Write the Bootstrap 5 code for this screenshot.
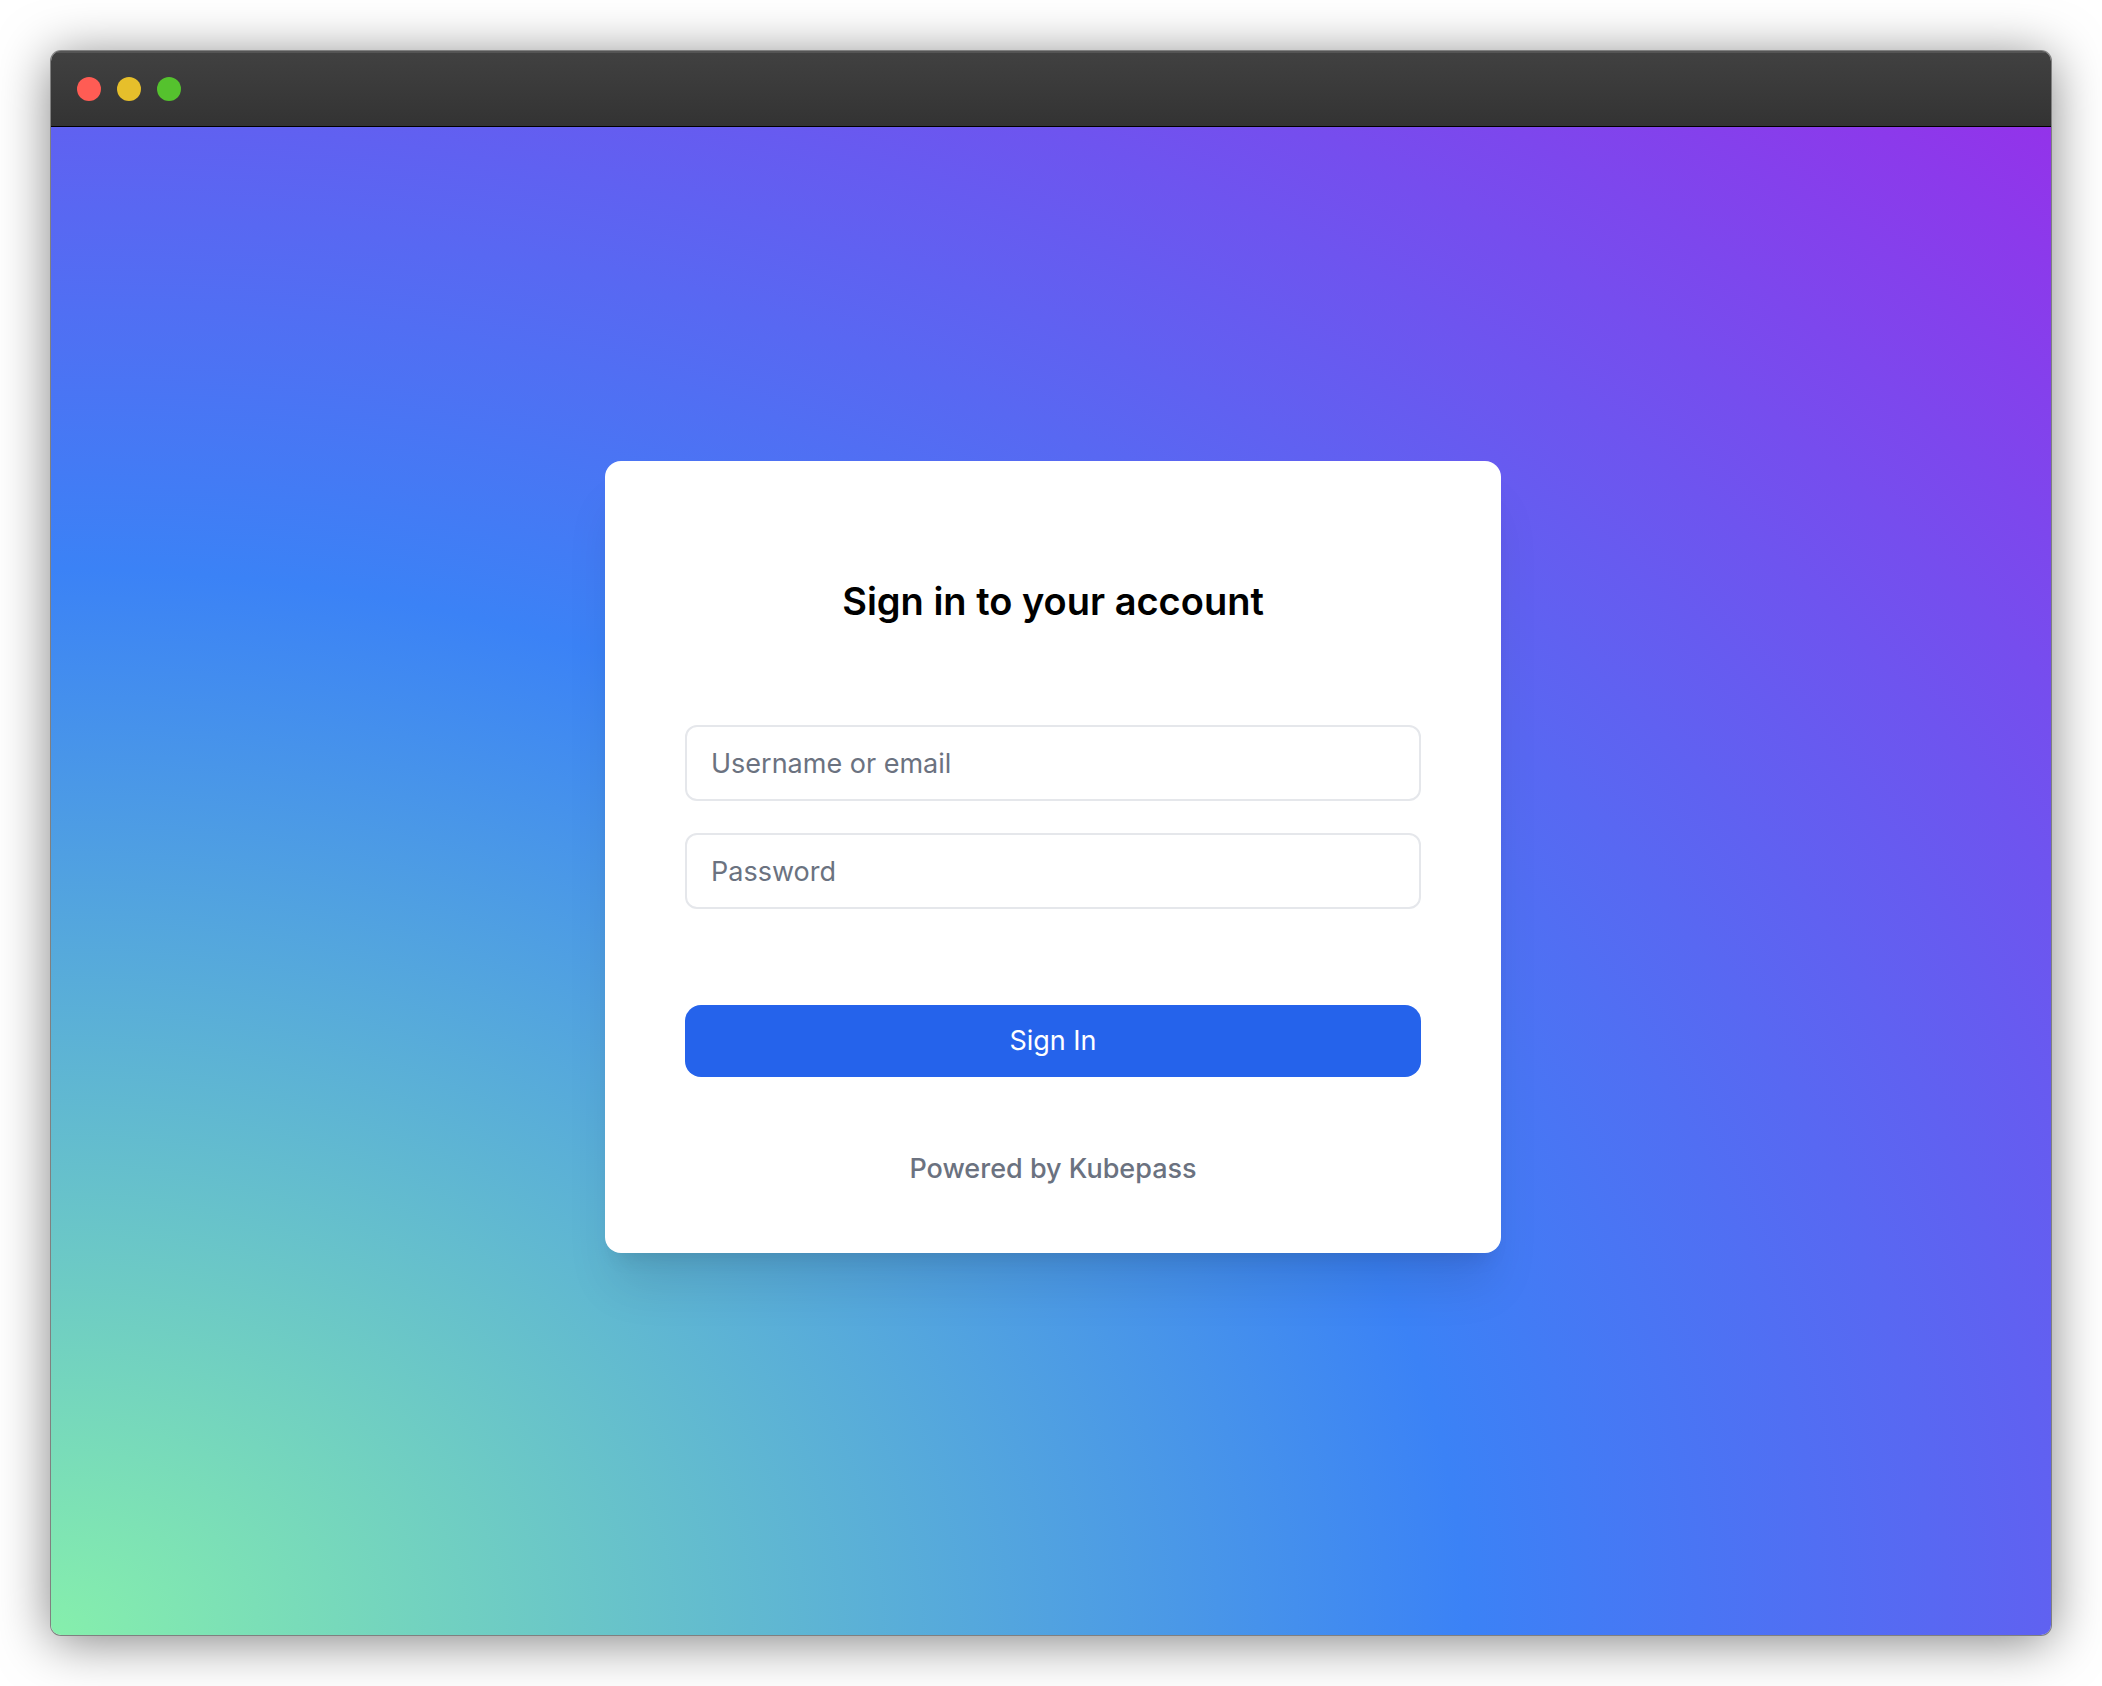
<!DOCTYPE html>
<html lang="en">
<head>
<meta charset="utf-8">
<meta name="viewport" content="width=device-width, initial-scale=1">
<title>Sign in to your account</title>
<link href="https://cdn.jsdelivr.net/npm/bootstrap@5.3.0/dist/css/bootstrap.min.css" rel="stylesheet">
<style>
  body { font-family: Inter, "Liberation Sans", sans-serif; padding: 51px; background: #fff; }
  .app-window {
    border-radius: 10px;
    box-shadow: 0 0 0 1px #808080, 0 6px 52px rgba(0, 0, 0, .5);
  }
  .title-bar {
    height: 76px;
    padding: 0 26px;
    gap: 16px;
    background: linear-gradient(#414141, #333);
    border-bottom: 1px solid #000;
    box-shadow: inset 0 2px 0 #555;
  }
  .light { width: 24px; height: 24px; border-radius: 50%; }
  .light-close { background: #ff5c54; }
  .light-min { background: #e6bf2b; }
  .light-max { background: #55c22e; }
  .backdrop {
    padding: 48px 0 96px 4px;
    background: radial-gradient(ellipse farthest-corner at bottom left, #86efac, #3b82f6 50%, #9333ea);
  }
  .login-card {
    --bs-card-border-width: 0;
    --bs-card-border-radius: 16px;
    width: 100%;
    max-width: 896px;
    padding: 116px 80px 64px;
    box-shadow: 0 40px 50px -10px rgba(0, 0, 0, .1), 0 16px 20px -12px rgba(0, 0, 0, .1);
  }
  .login-title { font-size: 38px; line-height: 48px; font-weight: 600; color: #000; margin-bottom: 100px; }
  .login-field {
    height: 76px;
    padding: 0 24px;
    font-size: 27px;
    border: 2px solid #e5e7eb;
    border-radius: 12px;
  }
  .login-field::placeholder { color: #6b7280; }
  .field-stack { gap: 32px; margin-bottom: 96px; }
  .btn-login {
    --bs-btn-bg: #2563eb;
    --bs-btn-color: #fff;
    --bs-btn-hover-bg: #1d4ed8;
    --bs-btn-hover-color: #fff;
    --bs-btn-border-width: 0;
    --bs-btn-border-radius: 16px;
    height: 72px;
    font-size: 27px;
  }
  .powered { margin-top: 72px; font-size: 27px; line-height: 40px; font-weight: 500; color: #6b7280; }
</style>
</head>
<body class="min-vh-100 d-flex flex-column">
<div class="app-window d-flex flex-column flex-grow-1 overflow-hidden">
  <header class="title-bar d-flex align-items-center flex-shrink-0">
    <span class="light light-close"></span>
    <span class="light light-min"></span>
    <span class="light light-max"></span>
  </header>
  <main class="backdrop d-flex flex-grow-1 align-items-center justify-content-center">
    <section class="card login-card">
      <h1 class="login-title text-center">Sign in to your account</h1>
      <form>
        <div class="field-stack d-flex flex-column">
          <input type="text" class="form-control login-field" placeholder="Username or email" aria-label="Username or email">
          <input type="password" class="form-control login-field" placeholder="Password" aria-label="Password">
        </div>
        <button type="submit" class="btn btn-login w-100">Sign In</button>
      </form>
      <p class="powered text-center mb-0">Powered by Kubepass</p>
    </section>
  </main>
</div>
<script src="https://cdn.jsdelivr.net/npm/bootstrap@5.3.0/dist/js/bootstrap.bundle.min.js"></script>
</body>
</html>
